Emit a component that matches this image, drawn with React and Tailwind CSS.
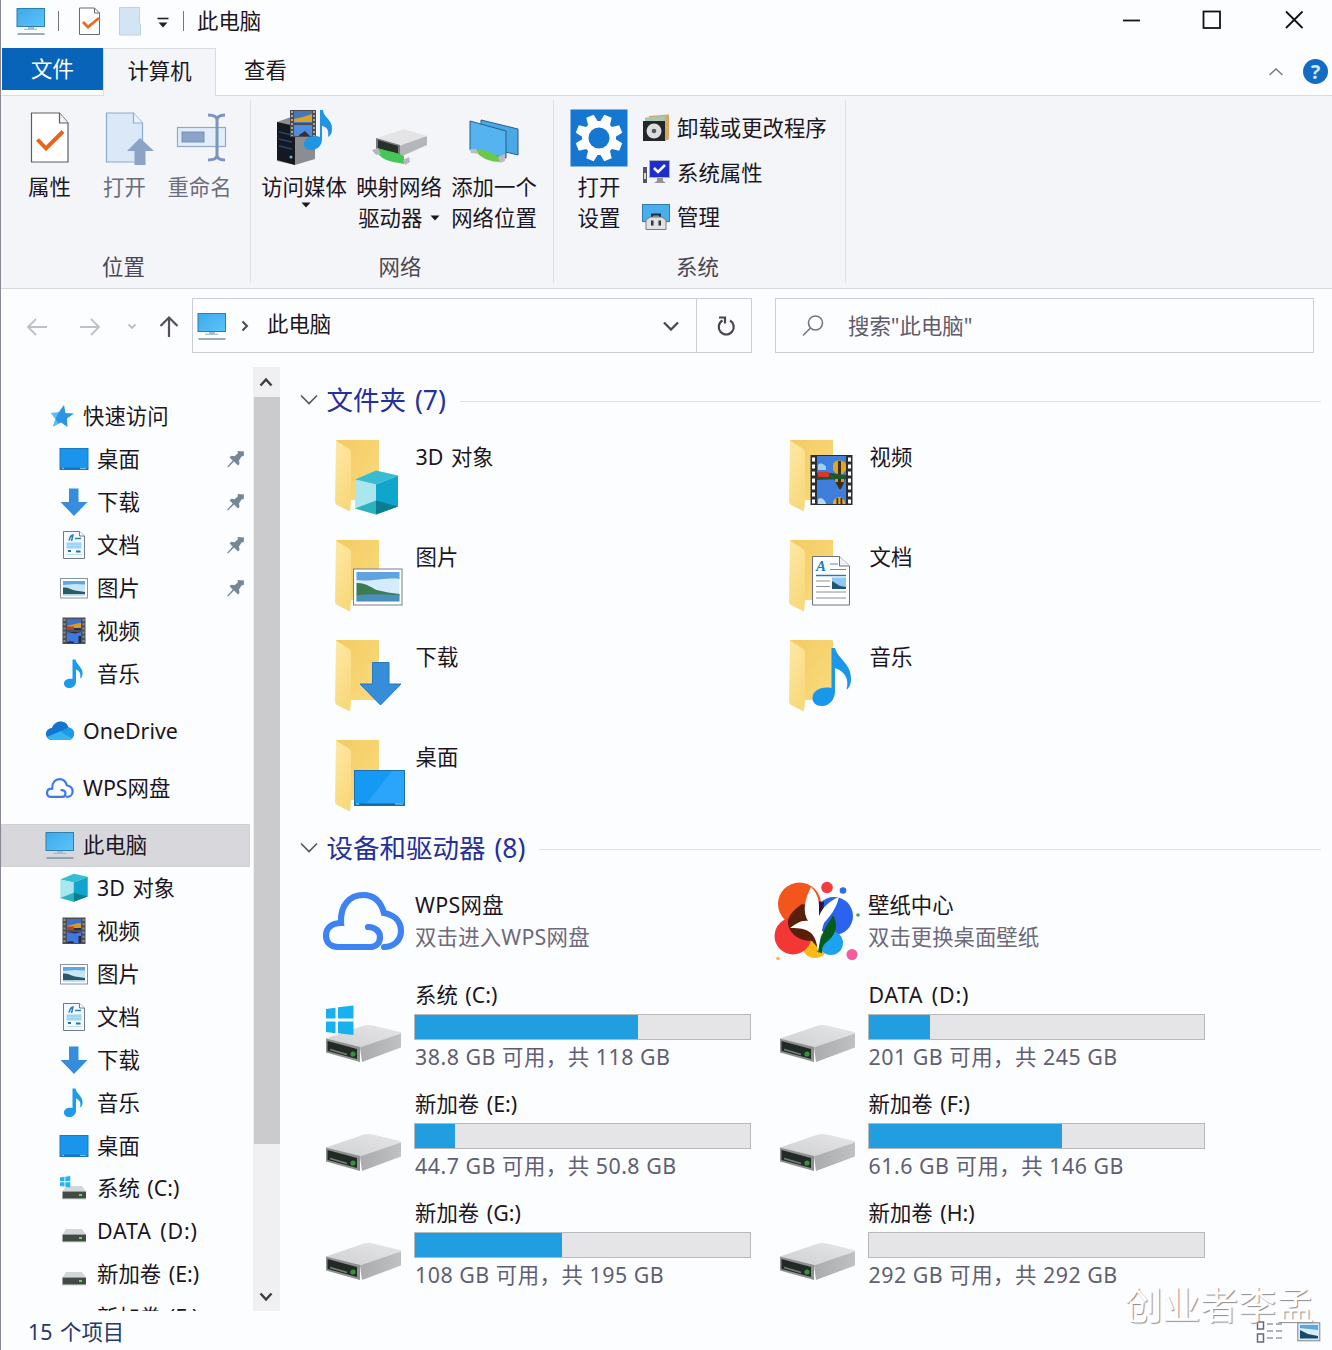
import React from 'react'

const Monitor = ({ className = '' }) => (
  <svg width="30" height="30" viewBox="0 0 30 30" className={`shrink-0 ${className}`}>
    <defs>
      <linearGradient id="screen" x1="0" y1="0" x2="1" y2="1">
        <stop offset="0" stopColor="#3fa9ea" />
        <stop offset="1" stopColor="#5cc4fb" />
      </linearGradient>
    </defs>
    <rect x="1" y="2.5" width="27.5" height="18" fill="url(#screen)" stroke="#2f7fae" strokeWidth="1" />
    <path d="M12 21h6v2h-6z" fill="#9fc4da" />
    <path d="M8 23.3h13" stroke="#9db4c4" strokeWidth="1" />
    <path d="M1.5 28h27" stroke="#8196a8" strokeWidth="1.6" />
  </svg>
)

const Star = () => (
  <svg width="30" height="30" viewBox="0 0 30 30" className="shrink-0">
    <path d="M19 4l1.500 8 8.500 0.500-7 5 .5 8.500-6.500-4.500-8 4 2.500-7.500L6 12l7.500-.5z" fill="#2a96e3" />
    <path d="M10.500 18L6 12l7.500-.5zM8 25.500l2.500-7.500 3 4.500z" fill="#5cc0f5" />
  </svg>
)

const DesktopIcon = () => (
  <svg width="30" height="30" viewBox="0 0 30 30" className="shrink-0">
    <rect x="1" y="4.500" width="28" height="21" fill="#1b95ec" stroke="#1878c0" strokeWidth="1" />
    <path d="M2 24.300h26" stroke="#1272bd" strokeWidth="1.400" />
    <path d="M3 24.300h2M21 24.300h6" stroke="#8ccdf8" strokeWidth="1" />
  </svg>
)

const DownIcon = () => (
  <svg width="30" height="30" viewBox="0 0 30 30" className="shrink-0">
    <path d="M10 1.5h9.5v13.5h9L15 29 1.500 15H10z" fill="#358ddb" />
  </svg>
)

const DocIcon = () => (
  <svg width="30" height="30" viewBox="0 0 30 30" className="shrink-0">
    <path d="M4.500 1.500h16l5 4.500v22.500h-21z" fill="#f3f9fd" stroke="#6f7c88" />
    <path d="M20.500 1.500v4.500h5" fill="#fff" stroke="#6f7c88" />
    <path d="M10 10.500c1-4 2-5.500 4-5.500l-1.500 6M16 8.500h6" stroke="#2680bb" strokeWidth="1.500" fill="none" />
    <path d="M7.500 12.500h15v6h-15z" fill="#9bd5f5" />
    <path d="M8 15.500h14M7.500 24.500h15" stroke="#b9dcf0" />
    <path d="M9 21h3M17 21.500h4.500" stroke="#2f6d98" strokeWidth="2.200" />
  </svg>
)

const PicIcon = () => (
  <svg width="30" height="30" viewBox="0 0 30 30" className="shrink-0">
    <rect x="1.500" y="5.500" width="27" height="19.500" fill="#fff" stroke="#8a93a3" />
    <rect x="4" y="8" width="22" height="14.500" fill="#c7e6fa" />
    <path d="M4 8h22v3.500l-10-.5-12 1z" fill="#5fa6e6" />
    <path d="M4 14.500c5-.5 8 2 12 3l10 1.500v2.500H4z" fill="#2c5a63" />
    <path d="M4 21h22v1.500H4z" fill="#a9d4ee" />
  </svg>
)

const VideoIcon = () => (
  <svg width="30" height="30" viewBox="0 0 30 30" className="shrink-0">
    <rect x="3.500" y="1.500" width="23" height="26.500" fill="#4d4f57" />
    <path d="M5.500 3v24M24.500 3v24" stroke="#8f9096" strokeWidth="2" strokeDasharray="2 2.200" />
    <rect x="8" y="3" width="14" height="11" fill="#3e6fc9" />
    <rect x="8" y="16" width="14" height="11" fill="#3d79e0" />
    <path d="M8 10c4-1 10-3 14-3v5H8z" fill="#d89b25" />
    <path d="M8 10.500h7V14H8z" fill="#b8402c" />
    <path d="M15 12h7v2h-7zM8 16h14l-6 1.500zM8 26c3-1 5-1 7 0v1H8zM19.500 20H22v7h-2.500z" fill="#2b2a3f" />
  </svg>
)

const MusicIcon = () => (
  <svg width="30" height="30" viewBox="0 0 30 30" className="shrink-0">
    <path d="M13.500 0.500h3c1 5.500 8 8 7 15-.3 2.500-1.300 3.500-2.500 4 1.500-5-1-8-4-9v12c0 4-3 6.500-6.500 6.500S5 27 5 24.500c0-3.500 4-5.500 8.500-4.500z" fill="#1b9bea" />
  </svg>
)

const OneDriveIcon = () => (
  <svg width="30" height="30" viewBox="0 0 30 30" className="shrink-0">
    <path d="M7 12C8 8 12 5.500 15.500 5.500c4 0 7 2 8 6 3 .3 5.500 3 5.500 6 0 3.500-2.500 6.500-6 6.500H7.500C4 24 1 21.500 1 18c0-3.500 3-6 6-6z" fill="#1474cf" />
    <path d="M23.500 11.500c3 .3 5.500 3 5.500 6 0 3.500-2.500 6.500-6 6.500H7.500C5 24 3 23 2 21z" fill="#1f9ae6" />
    <path d="M15 15.500l12.500 7C26.300 23.500 25 24 23 24H7.500C5 24 3 23 2 21z" fill="#35b4ee" />
  </svg>
)

const cloudPath =
  'M48 42C56 42 60 47 60 52C60 59 55 62 50 62H18C10 62 6 57 6 50.500C6 43 12 38 21 38C20 20 30 10 43 10C54 10 61 17 64 28C75 30 81 37 81 46C81 55 74 62 64 62'

const CloudIcon = () => (
  <svg width="30" height="30" viewBox="0 -8 88 88" className="shrink-0">
    <path d={cloudPath} fill="none" stroke="#4078e4" strokeWidth="6.500" strokeLinecap="round" />
  </svg>
)

const CubeShape = () => (
  <>
    <path d="M21 41l21-9 22 5-22 9z" fill="#37bdd3" />
    <path d="M21 41l21 5v30l-21-6z" fill="#a9e6ef" />
    <path d="M64 37v31l-22 8V46z" fill="#10a5cd" />
    <path d="M21 70l21-8v14z" fill="#2cb2bf" />
    <path d="M42 62l22 6-22 8z" fill="#0b7d92" />
  </>
)

const CubeIcon = () => (
  <svg width="30" height="30" viewBox="19 31 47 47" className="shrink-0">
    <CubeShape />
  </svg>
)

const MiniDrive = ({ windows }) => (
  <svg width="30" height="30" viewBox="0 0 30 30" className="shrink-0">
    <path d="M7 13h16l4 5.500H3.500z" fill="#d3d6d8" />
    <path d="M3.500 18.500H27v7H3.500z" fill="#414b44" />
    <path d="M3.500 25h23.500v1.200H3.500z" fill="#8f9592" />
    <path d="M20 22h3" stroke="#5fd46a" strokeWidth="2" />
    {windows && <path d="M1 4.500l4.500-.7v4.500H1zM6.300 3.700l5-.7v5.300h-5zM1 9.200h4.500v4.300L1 13zM6.300 9.200h5v5.200l-5-.7z" fill="#25b5ee" />}
  </svg>
)

const Pin = () => (
  <svg width="18" height="18" viewBox="0 0 18 18" className="shrink-0">
    <path d="M10.500 1l6.500.5-.2 4.500-2.300.5-2.500 4 .5 3.500-1.500 1.500-4-4-6 6-.8-.8 5.500-6.200-3.200-3.200 2-1.500 3 .5 3.500-3z" fill="#758795" />
  </svg>
)

const Folder = ({ children }) => (
  <svg width="74" height="80" viewBox="0 0 74 80" className="shrink-0">
    <defs>
      <linearGradient id="fback" x1="0" y1="0" x2="1" y2="1">
        <stop offset="0" stopColor="#f3cb62" />
        <stop offset="1" stopColor="#fbdb7f" />
      </linearGradient>
      <linearGradient id="ffront" x1="0" y1="0" x2="0.400" y2="1">
        <stop offset="0" stopColor="#fde9a6" />
        <stop offset="1" stopColor="#f9d97d" />
      </linearGradient>
    </defs>
    <path d="M2 2h43v60H16z" fill="url(#fback)" />
    <path d="M2 2.500l12.500 8c2 1.300 2.500 2.500 2.500 5V63c0 3-.5 6-1 10.500L5 68c-2.500-1.200-4-2-4-5z" fill="url(#ffront)" />
    {children}
  </svg>
)

const Balloons = ({ y }) => (
  <g>
    <path d={`M45 ${y + 8}c0-6 13-6 13 0v5l-4 5h-5l-4-5z`} fill="#e0a62a" />
    <path d={`M50 ${y + 4}h3v14h-3z`} fill="#3f321c" />
    <path d={`M30 ${y + 8}c2-3 6-1 8 2v3h-8z`} fill="#9ed0f0" />
  </g>
)

const FilmShape = () => (
  <>
    <rect x="22.500" y="17" width="42" height="50" fill="#2c2c33" />
    <path d="M25.500 19.500v46M61.500 19.500v46" stroke="#fff" strokeWidth="3" strokeDasharray="4 3" />
    <rect x="29" y="18" width="29" height="48" fill="#3f7fdc" />
    <Balloons y={19} />
    <path d="M29 35c6-2 10 1 14 0l15 2v4l-29 1z" fill="#24552a" />
    <path d="M30 34h11v5H30z" fill="#d03a31" />
    <path d="M46 41h11l-2 6-3 5-3-5z" fill="#402a14" />
    <path d="M47 41h3v3h-3zM53 41h3v3h-3z" fill="#d49a28" />
    <path d="M45 66c0-9 12-9 12 0z" fill="#e9ad29" />
    <path d="M48.500 60h1.800v6h-1.800zM52.500 60h1.800v6h-1.800z" fill="#352a1a" />
    <path d="M30 61c4-2 7 1 8 5h-8z" fill="#b5dcf4" />
  </>
)

const folderArt = {
  cube: <g transform="translate(0 0.500)"><CubeShape /></g>,
  picture: (
    <>
      <rect x="19.500" y="31" width="48.500" height="36" fill="#fff" stroke="#7d7f87" />
      <rect x="22.500" y="34" width="43" height="29.500" fill="#d6ebfb" />
      <path d="M22.500 34h43v7c-10-2-30 3-43 1z" fill="#5fa3e2" />
      <path d="M22.500 45c7-.5 13 3 20 7 8 2 15 3 23 4v2h-43z" fill="#3c7b53" />
      <path d="M22.500 57c14-1 28-1 43 0v6.500h-43z" fill="#4b8fbd" />
    </>
  ),
  download: <path d="M38.500 24.500h16.500V46h12L46.500 67 26 46h12.500z" fill="#368dd8" stroke="#2677bc" />,
  desktop: (
    <>
      <rect x="20.500" y="32.500" width="50" height="35" fill="#149af5" stroke="#1a6faf" />
      <path d="M32 66l26-33h12v33z" fill="#2aa5fb" />
      <path d="M21 66.300h49" stroke="#1267a5" strokeWidth="1.600" />
      <path d="M22 66h3M61 66h8" stroke="#a4d7f8" strokeWidth="1" />
    </>
  ),
  film: <FilmShape />,
  doc: (
    <>
      <path d="M24.500 18.500h27l10 9.500v39h-37z" fill="#fff" stroke="#6c7180" />
      <path d="M51.500 18.500V28h10" fill="#f1f3f6" stroke="#6c7180" />
      <text x="28" y="33" fontSize="15" fontWeight="bold" fontStyle="italic" fill="#1d7cc4" className="font-['Liberation_Serif']">A</text>
      <path d="M42 26h8M42 31.500h16" stroke="#4c90c4" />
      <path d="M28 37.500h30" stroke="#2878b5" strokeWidth="1.500" />
      <path d="M28 43h14M28 48.500h14M28 54h30M28 60h30" stroke="#8a919c" />
      <path d="M44 39.500h14V51H44z" fill="#8fc8f2" />
      <path d="M44 43l8 5 6 1v2H44z" fill="#1f5674" />
    </>
  ),
  music: (
    <path d="M43.500 10h3.500c3 11 17 16 16 32-.3 6-3 9-4.500 9.500 3-11-2-18-11.500-21.500v23c0 8-5 15-13 15-6 0-9.500-3.500-9.500-8 0-7 8-12 19-10z" fill="#1997e8" />
  ),
}

const Drive = ({ windows }) => (
  <svg width="80" height="64" viewBox="0 0 80 64" className="shrink-0">
    <defs>
      <linearGradient id="dtop" x1="0" y1="1" x2="1" y2="0">
        <stop offset="0" stopColor="#cfd0d2" />
        <stop offset="1" stopColor="#e6e6e8" />
      </linearGradient>
      <linearGradient id="dside" x1="0" y1="0" x2="1" y2="0">
        <stop offset="0" stopColor="#a9abad" />
        <stop offset="1" stopColor="#c0c1c3" />
      </linearGradient>
    </defs>
    <path d="M2 38.500l38-13c3-.7 6-.7 9 0L76 32c1.500.5 1.500 2 0 2.500L36 48.500z" fill="url(#dtop)" />
    <path d="M36 47.500l41-14v14L38 62z" fill="url(#dside)" />
    <path d="M2 38.500L36 47v15L2 52.500z" fill="#8e9190" />
    <path d="M3.500 41L33 49v10L3.500 51z" fill="#222a26" />
    <path d="M6 49.500l17 5" stroke="#77807b" strokeWidth="1.500" />
    <circle cx="29" cy="54" r="2.600" fill="#36913d" />
    {windows && <path d="M2 9l9.500-1.200V18.500H2zM14 7.200L29.500 5.500v13H14zM2 21.500h9.500v11.700L2 32zM14 21.500h15.500v13.500L14 33.200z" fill="#18b1ef" />}
  </svg>
)

const BigCloud = () => (
  <svg width="88" height="72" viewBox="0 0 88 72" className="shrink-0">
    <path d={cloudPath} fill="none" stroke="#3f82f2" strokeWidth="6.200" strokeLinecap="round" />
  </svg>
)

const WallpaperLogo = () => (
  <svg width="88" height="82" viewBox="772 880 88 82" className="shrink-0">
    <circle cx="799.500" cy="904" r="21.500" fill="#f2561d" />
    <circle cx="815" cy="945" r="13" fill="#fbb916" />
    <circle cx="793" cy="936" r="18.500" fill="#f33636" />
    <circle cx="834" cy="916" r="19" fill="#2b63ef" />
    <circle cx="831" cy="943" r="12" fill="#1da2ef" />
    <path d="M802 904c-5 4-12 8-14 17-1 9 8 20 24 20l6 7 4-39z" fill="#5a1f09" />
    <path d="M816 901l8 1-1 12-6 4z" fill="#2a1440" />
    <path d="M821 938c4-12 10-18 12-23 5 8 4 18-4 25-5 4-7 6-7 13l-5-1z" fill="#085c1b" />
    <path d="M811 887c5 5 8 11 8 19v10c4-9 10-15 20-19-3 13-10 20-15 26-3 9-4 17-6 30-1-9-2-15-7-20-5-4-10-5-21-5 6-4 11-8 18-7-6-10-3-22 3-34z" fill="#fff" />
    <circle cx="827" cy="887.500" r="5.800" fill="#f43b40" />
    <circle cx="843" cy="890.500" r="3.300" fill="#2f6bea" />
    <circle cx="858" cy="915" r="1.800" fill="#35a853" />
    <circle cx="852" cy="954.500" r="5.500" fill="#f55ca0" />
    <circle cx="778" cy="958.500" r="1.800" fill="#f5b63c" />
  </svg>
)

// ribbon icons, all in a 58px high box
const PropsIcon = () => (
  <svg width="58" height="58" viewBox="0 0 58 58">
    <path d="M10.500 4h28l8.500 10v39H10.500z" fill="#fff" stroke="#5d5d66" strokeWidth="1.200" />
    <path d="M38.500 4v10H47" fill="#f3f3f5" stroke="#5d5d66" strokeWidth="1.200" />
    <path d="M16.500 30.500L25 39.500 42 22.500" fill="none" stroke="#e8641b" strokeWidth="4" />
  </svg>
)

const OpenIcon = () => (
  <svg width="58" height="58" viewBox="0 0 58 58">
    <path d="M10.500 4h27l9 10v39h-36z" fill="#dbe8f8" stroke="#8fa9cb" strokeWidth="1.200" />
    <path d="M37.500 4v10h9" fill="#eef4fc" stroke="#8fa9cb" strokeWidth="1.200" />
    <path d="M44 29l14 13h-8.500v14h-11V42H31z" fill="#8ba3c7" />
  </svg>
)

const RenameIcon = () => (
  <svg width="58" height="58" viewBox="0 0 58 58">
    <rect x="6.500" y="18.500" width="48" height="19" fill="#e3edfa" stroke="#8fa9cb" strokeWidth="1.200" />
    <rect x="11" y="23" width="22" height="10" fill="#8ba3c7" stroke="#7490ba" />
    <path d="M37 6c5 0 9 1 9 5v35c0 4-4 5-9 5M54 6c-5 0-8 1-8 5v35c0 4 3 5 8 5" fill="none" stroke="#7c95bd" strokeWidth="3" />
  </svg>
)

const MediaIcon = () => (
  <svg width="58" height="58" viewBox="0 0 58 58">
    <path d="M2 13l14-5 24 5v37l-20 6L2 52z" fill="#8c8d93" />
    <path d="M2 13l18 4v39L2 51z" fill="#15181f" />
    <path d="M4 23l13 3M4 30l13 3M4 37l13 3" stroke="#1d4877" strokeWidth="1.500" />
    <rect x="15" y="1" width="26" height="27" fill="#4d4a50" />
    <path d="M17 2v25M39 2v25" stroke="#a9a49e" strokeWidth="2" strokeDasharray="2 2" />
    <rect x="19" y="2" width="18" height="12" fill="#4778b6" />
    <rect x="19" y="16" width="18" height="11" fill="#4c8fe0" />
    <path d="M19 10l9-2 9-3v8H19z" fill="#d9a42b" />
    <path d="M24 26l6-4 5 5H24z" fill="#33303a" />
    <path d="M45 1h3c0 7 10 10 9 19 0 5-2 7-4 8 1-7-1-10-6-11v13c0 7-5 11-11 11-5 0-7-3-7-6 0-5 5-8 11-8 2 0 3 0 5 1z" fill="#1f95e3" />
    <circle cx="16" cy="48" r="1.500" fill="#67b5f0" />
  </svg>
)

const MapDriveIcon = () => (
  <svg width="58" height="58" viewBox="0 0 58 58">
    <path d="M7 29l24-8c2-.6 4-.6 6 0l20 6-28 10z" fill="#e4e4e6" />
    <path d="M29 37l28-10v9L30 48z" fill="#b4b6b8" />
    <path d="M6 29l24 7v12L6 40z" fill="#757877" />
    <path d="M8 31l20 6v8L8 39z" fill="#28302c" />
    <path d="M7 39c8 3 16 3 27 8v8l-5-1c-8-1-15-3-20-8z" fill="#45c755" />
    <path d="M2 41l6-2 3 6-5 1zM33 51l6-3 1 5-5 3z" fill="#b4b8b9" />
  </svg>
)

const AddNetIcon = () => (
  <svg width="58" height="58" viewBox="0 0 58 58">
    <path d="M16 11l37 9v26l-37-9z" fill="#4aa8e6" stroke="#21618a" />
    <path d="M5 12l36 10v27L5 41z" fill="#55b4ef" stroke="#235f85" />
    <path d="M11 40c8 0 15 4 24 8v5c-8 0-17-3-22-8z" fill="#6cc848" />
    <path d="M5 40l6 0 3 5-8-1zM33 48l7-3v7l-5 2z" fill="#b9bfc0" />
  </svg>
)

const GearIcon = () => (
  <svg width="58" height="58" viewBox="0 0 58 58">
    <rect x="0.500" y="0.500" width="57" height="57" fill="#1577cf" />
    <g transform="translate(29 29)" fill="#fff">
      {[22.5, 67.5, 112.5, 157.5, 202.5, 247.5, 292.5, 337.5].map((a) => (
        <path key={a} d="M-5.500-14l1.500-9.500h8l1.500 9.500z" transform={`rotate(${a})`} />
      ))}
      <circle r="17" />
      <circle r="10.500" fill="#1577cf" />
    </g>
  </svg>
)

const UninstallIcon = () => (
  <svg width="28" height="28" viewBox="0 0 28 28">
    <path d="M7 2l20-1.500V25l-4 2V6H7z" fill="#d8a65e" />
    <path d="M3 3.500L23 2v6H3z" fill="#a9c7b4" />
    <rect x="1" y="7" width="22" height="20" fill="#25262a" />
    <circle cx="12" cy="17" r="7.500" fill="#dcdddf" />
    <circle cx="12" cy="17" r="2.300" fill="#55585c" />
  </svg>
)

const SysPropsIcon = () => (
  <svg width="28" height="28" viewBox="0 0 28 28">
    <path d="M1 8h4v16H1z" fill="#54585e" />
    <path d="M2 14h2v6H2z" fill="#d5d8db" />
    <rect x="7.500" y="1.500" width="20" height="17" fill="#1c2fcb" stroke="#a9b1c5" />
    <path d="M12 9l4 4 7-7" fill="none" stroke="#fff" strokeWidth="2.500" />
    <path d="M15 19h6v3l3 2H12l3-2z" fill="#9a9299" />
  </svg>
)

const ManageIcon = () => (
  <svg width="28" height="28" viewBox="0 0 28 28">
    <rect x="0.500" y="1.500" width="27" height="17" fill="#4aaeec" stroke="#347dab" />
    <path d="M10 14v-2.500h8V14" fill="none" stroke="#2a2d33" strokeWidth="2" />
    <path d="M4 17l4-3h12l4 3v9.500H4z" fill="#dfe1e3" stroke="#777b80" />
    <path d="M9 17.500h2.500v5H9zM16.500 17.500H19v5h-2.500z" fill="#33363b" />
  </svg>
)

const places = [
  { label: '桌面', icon: DesktopIcon, pin: true },
  { label: '下载', icon: DownIcon, pin: true },
  { label: '文档', icon: DocIcon, pin: true },
  { label: '图片', icon: PicIcon, pin: true },
  { label: '视频', icon: VideoIcon },
  { label: '音乐', icon: MusicIcon },
]

const pcItems = [
  { label: '3D 对象', icon: CubeIcon },
  { label: '视频', icon: VideoIcon },
  { label: '图片', icon: PicIcon },
  { label: '文档', icon: DocIcon },
  { label: '下载', icon: DownIcon },
  { label: '音乐', icon: MusicIcon },
  { label: '桌面', icon: DesktopIcon },
  { label: '系统 (C:)', icon: () => <MiniDrive windows /> },
  { label: 'DATA (D:)', icon: MiniDrive, wide: true },
  { label: '新加卷 (E:)', icon: MiniDrive },
  { label: '新加卷 (F:)', icon: () => <span className="w-[30px]" /> },
]

const folders = [
  { label: '3D 对象', art: 'cube' },
  { label: '视频', art: 'film' },
  { label: '图片', art: 'picture' },
  { label: '文档', art: 'doc' },
  { label: '下载', art: 'download' },
  { label: '音乐', art: 'music' },
  { label: '桌面', art: 'desktop' },
]

const drives = [
  { name: '系统 (C:)', info: '38.8 GB 可用，共 118 GB', used: 66.7, windows: true },
  { name: 'DATA (D:)', info: '201 GB 可用，共 245 GB', used: 18.3, wide: true },
  { name: '新加卷 (E:)', info: '44.7 GB 可用，共 50.8 GB', used: 12 },
  { name: '新加卷 (F:)', info: '61.6 GB 可用，共 146 GB', used: 57.8 },
  { name: '新加卷 (G:)', info: '108 GB 可用，共 195 GB', used: 44 },
  { name: '新加卷 (H:)', info: '292 GB 可用，共 292 GB', used: 0 },
]

const TreeRow = ({ item, root, active }) => {
  const Icon = item.icon
  return (
    <div className={`flex h-[42.9px] w-[249px] shrink-0 items-center ${active ? 'border border-[#cfcfd4] bg-[#d8d8dc] pl-[43px]' : root ? 'pl-11' : 'pl-[58px]'}`}>
      <Icon />
      <span className={`ml-2 whitespace-nowrap ${item.wide ? 'tracking-[0.85px]' : ''}`}>{item.label}</span>
      {item.pin && <span className="mr-[5px] ml-auto"><Pin /></span>}
    </div>
  )
}

const GroupHeading = ({ children }) => (
  <div className="flex h-9 items-center text-[26.5px] text-[#26309a]">
    <svg width="18" height="12" viewBox="0 0 18 12" className="mr-[9px] shrink-0">
      <path d="M1 1.500l8 8 8-8" fill="none" stroke="#55555f" strokeWidth="1.600" />
    </svg>
    <span className="whitespace-nowrap">{children}</span>
    <span className="mt-0.5 ml-[14px] h-px flex-1 bg-[#dcdfe8]" />
  </div>
)

const RibbonButton = ({ icon, lines, width, muted, arrow }) => (
  <div className={`flex flex-col items-center ${width} ${muted ? 'text-[#6d6c7c]' : ''}`}>
    {icon}
    <div className="mt-1 text-center leading-[31px] whitespace-nowrap">
      {lines.map((l, i) => <div key={i}>{l}</div>)}
    </div>
    {arrow && <Caret className="ml-1" />}
  </div>
)

const Caret = ({ className = '' }) => (
  <svg width="10" height="6" viewBox="0 0 10 6" className={`inline-block ${className}`}>
    <path d="M0.500 0.500h9L5 5.500z" fill="#1b1720" />
  </svg>
)

const RibbonGroup = ({ width, label, children }) => (
  <div className={`flex flex-col justify-between border-r border-[#dcdfe5] ${width}`}>
    <div className="flex">{children}</div>
    <div className="pr-1 pb-[1px] text-center leading-[30px] text-[#4a4753]">{label}</div>
  </div>
)

const App = () => (
  <div className="relative flex h-[1350px] w-[1332px] flex-col overflow-hidden border-l border-[#8d8796] bg-[#fcfdff] font-['Noto_Sans','Noto_Sans_CJK_SC',sans-serif] text-[21.4px] leading-[30px] text-[#1b1622] [word-spacing:2px]">
    {/* title bar */}
    <header className="flex h-12 shrink-0 items-start">
      <div className="flex h-[42px] items-center pl-[15px]">
        <Monitor />
        <span className="ml-3 h-5 w-px bg-[#77747d]" />
        <svg width="24" height="30" viewBox="0 0 24 30" className="ml-[19px]">
          <path d="M1.500 2h15l5 5v21.500h-20z" fill="#fff" stroke="#6a6870" />
          <path d="M16.500 2v5h5" fill="none" stroke="#6a6870" />
          <path d="M5 16l5 5 11-9" fill="none" stroke="#ea6b28" strokeWidth="2.800" />
        </svg>
        <svg width="24" height="30" viewBox="0 0 24 30" className="ml-4">
          <path d="M1.500 1.500h20V17l1 1v11h-21z" fill="#d3e4f5" stroke="#bcd2e8" />
        </svg>
        <svg width="12" height="12" viewBox="0 0 12 12" className="mt-1 ml-[15px]">
          <path d="M0.500 1.500h11" stroke="#222" strokeWidth="1.600" />
          <path d="M1.500 5.500h9L6 10.500z" fill="#222" />
        </svg>
        <span className="ml-[14px] h-5 w-px bg-[#77747d]" />
        <span className="ml-[13px]">此电脑</span>
      </div>
      <svg width="182" height="20" viewBox="0 0 182 20" className="mt-[10px] mr-[27px] ml-auto" fill="none" stroke="#141218" strokeWidth="1.800">
        <path d="M0 10.500h17" />
        <rect x="80.500" y="1.500" width="16.500" height="16.500" />
        <path d="M163 1.500l16.500 16.500M179.500 1.500L163 18" />
      </svg>
    </header>

    {/* tabs */}
    <div className="flex h-12 shrink-0 items-start border-b border-[#d9dce0]">
      <div className="ml-px flex h-[42px] w-[101px] items-center justify-center bg-[#0864b8] text-white">文件</div>
      <div className="flex h-12 w-[113px] items-center justify-center border border-b-0 border-[#d9dce0] bg-[#f4f5f9] pb-1">计算机</div>
      <div className="ml-7 flex h-11 items-center">查看</div>
      <div className="mt-[11px] mr-1 ml-auto flex items-center">
        <svg width="14" height="8" viewBox="0 0 14 8">
          <path d="M0.500 7L7 1l6.500 6" fill="none" stroke="#7b7984" strokeWidth="1.500" />
        </svg>
        <span className="ml-5 flex h-[25px] w-[25px] items-center justify-center rounded-full bg-[#136cc4] text-xl font-bold text-[#cfe6fb]">?</span>
      </div>
    </div>

    {/* ribbon */}
    <div className="flex h-[193px] shrink-0 border-b border-[#d5d8dd] bg-[#f4f5f9] pt-1 pb-[5px]">
      <RibbonGroup width="w-[250px]" label="位置">
        <div className="flex pt-[9px] pl-[11px]">
          <RibbonButton width="w-[75px]" icon={<PropsIcon />} lines={['属性']} />
          <RibbonButton width="w-[75px]" icon={<OpenIcon />} lines={['打开']} muted />
          <RibbonButton width="w-[75px]" icon={<RenameIcon />} lines={['重命名']} muted />
        </div>
      </RibbonGroup>
      <RibbonGroup width="w-[303px]" label="网络">
        <div className="flex pt-[9px] pl-[5.500px]">
          <RibbonButton width="w-[95px]" icon={<MediaIcon />} lines={['访问媒体']} arrow />
          <RibbonButton width="w-[95px]" icon={<MapDriveIcon />} lines={['映射网络', <span>驱动器 <Caret className="mb-1" /></span>]} />
          <RibbonButton width="w-[95px]" icon={<AddNetIcon />} lines={['添加一个', '网络位置']} />
        </div>
      </RibbonGroup>
      <RibbonGroup width="w-[292px]" label="系统">
        <div className="flex pt-[9px] pl-[16px]">
          <RibbonButton width="w-[58px]" icon={<GearIcon />} lines={['打开', '设置']} />
          <div className="ml-[14px] flex flex-col gap-[14.500px] pt-1">
            <div className="flex items-center gap-[7px]"><UninstallIcon />卸载或更改程序</div>
            <div className="flex items-center gap-[7px]"><SysPropsIcon />系统属性</div>
            <div className="flex items-center gap-[7px]"><ManageIcon />管理</div>
          </div>
        </div>
      </RibbonGroup>
    </div>

    {/* address bar */}
    <div className="flex h-[74px] shrink-0 items-start pt-[9px]">
      <svg width="191" height="56" viewBox="1 298 191 56" fill="none" strokeWidth="1.800">
        <path d="M47 327H28M36 319l-8 8 8 8M80 327h19M91 319l8 8-8 8" stroke="#bfbfc8" />
        <path d="M128.500 324.500l3.500 3.500 3.500-3.500" stroke="#bcbcc5" />
        <path d="M169 337v-19M160.500 326l8.500-8.500 8.500 8.500" stroke="#55505c" strokeWidth="2.200" />
      </svg>
      <div className="flex h-[55px] w-[560px] items-center border border-[#cbced6]">
        <Monitor className="ml-1" />
        <svg width="8" height="12" viewBox="0 0 8 12" className="ml-[14px]">
          <path d="M1.500 1.500L6 6l-4.500 4.500" fill="none" stroke="#4a4652" strokeWidth="2" />
        </svg>
        <span className="mb-[3px] ml-[18px]">此电脑</span>
        <svg width="16" height="10" viewBox="0 0 16 10" className="mr-[17px] ml-auto">
          <path d="M1 1.500l7 7 7-7" fill="none" stroke="#4a4652" strokeWidth="2.300" />
        </svg>
        <div className="flex h-full w-[55px] items-center justify-center border-l border-[#cbced6]">
          <svg width="20" height="22" viewBox="0 0 20 22" fill="none" stroke="#4a4450" strokeWidth="2.200" className="ml-1">
            <path d="M14 5.500a7.500 7.500 0 1 1-7.500 0" />
            <path d="M3 2.500h6v6" />
          </svg>
        </div>
      </div>
      <div className="ml-[23px] flex h-[55px] w-[539px] items-center border border-[#cbced6] text-[#5f5b6b]">
        <svg width="22" height="22" viewBox="0 0 22 22" className="ml-[26px]" fill="none" stroke="#77747f" strokeWidth="1.600">
          <circle cx="13.500" cy="8" r="7" />
          <path d="M8.500 13L1 20.500" />
        </svg>
        <span className="ml-6">搜索"此电脑"</span>
      </div>
    </div>

    {/* body */}
    <div className="flex min-h-0 flex-1">
      <nav className="flex w-[252px] shrink-0 flex-col overflow-hidden pt-8">
        <TreeRow root item={{ label: '快速访问', icon: Star }} />
        {places.map((p) => <TreeRow key={p.label} item={p} />)}
        <div className="mt-[14.300px] flex flex-col gap-[14.300px]">
          <TreeRow root item={{ label: 'OneDrive', icon: OneDriveIcon }} />
          <TreeRow root item={{ label: 'WPS网盘', icon: CloudIcon }} />
          <TreeRow root active item={{ label: '此电脑', icon: Monitor }} />
        </div>
        {pcItems.map((p) => <TreeRow key={p.label} item={p} />)}
      </nav>

      <div className="mt-1 flex w-[27px] shrink-0 flex-col items-center bg-[#f0f0f3]">
        <div className="flex h-[30px] items-center">
          <svg width="14" height="10" viewBox="0 0 14 10" className="mr-0.5"><path d="M1.500 8.500L7 2.500l5.500 6" fill="none" stroke="#3f3c44" strokeWidth="2.500" /></svg>
        </div>
        <div className="h-[747px] w-[26px] bg-[#cbcbce]" />
        <div className="mt-auto flex h-[28px] items-center">
          <svg width="14" height="10" viewBox="0 0 14 10" className="mr-0.5"><path d="M1.500 1.500L7 7.500l5.500-6" fill="none" stroke="#3f3c44" strokeWidth="2.500" /></svg>
        </div>
      </div>

      <main className="min-w-0 flex-1 pt-[19px] pr-[11px] pl-[19.500px]">
        <GroupHeading>文件夹 (7)</GroupHeading>
        <div className="mt-[20px] ml-[34px] grid grid-cols-[454px_1fr]">
          {folders.map((f) => (
            <div key={f.label} className="flex h-[100px] items-start">
              <Folder>{folderArt[f.art]}</Folder>
              <span className="mt-1 ml-2">{f.label}</span>
            </div>
          ))}
        </div>

        <div className="-mt-[8px]"><GroupHeading>设备和驱动器 (8)</GroupHeading></div>
        <div className="mt-[12px] ml-[20.500px] grid h-[102px] grid-cols-[453px_1fr]">
          <div className="flex items-start">
            <div className="mt-[7px]"><BigCloud /></div>
            <div className="mt-[11px] ml-[7px] leading-[32px]">
              <div className="tracking-[0.3px]">WPS网盘</div>
              <div className="tracking-[0.200px] text-[#6d697b]">双击进入WPS网盘</div>
            </div>
          </div>
          <div className="flex items-start">
            <div className="mt-[2px] -ml-[1px]"><WallpaperLogo /></div>
            <div className="mt-[11px] ml-[8px] leading-[32px]">
              <div>壁纸中心</div>
              <div className="text-[#6d697b]">双击更换桌面壁纸</div>
            </div>
          </div>
        </div>
        <div className="ml-[24.500px] grid grid-cols-[453.500px_1fr]">
          {drives.map((d) => (
            <div key={d.name} className="flex h-[109px] items-start">
              <div className="mt-[20px]"><Drive windows={d.windows} /></div>
              <div className="ml-[10px]">
                <div className={`h-[34px] pl-px ${d.wide ? 'tracking-[0.85px]' : ''}`}>{d.name}</div>
                <div className="h-[26px] w-[337px] border border-[#b9b9bd] bg-[#e5e5e7]">
                  <div className="h-full bg-[#209ee0]" style={{ width: `${d.used}%` }} />
                </div>
                <div className="mt-[2px] pl-px tracking-[0.500px] whitespace-nowrap text-[#625e72] [word-spacing:0px]">{d.info}</div>
              </div>
            </div>
          ))}
        </div>
      </main>
    </div>

    {/* status bar */}
    <footer className="flex h-[39px] shrink-0 items-center pt-0.5 pr-[11px] pl-[27px] text-[#27396a]">
      <span>15 个项目</span>
      <svg width="28" height="24" viewBox="0 0 28 24" className="ml-auto" fill="none" stroke="#696775" strokeWidth="1.500">
        <path d="M1.500 2h6v7h-6zM1.500 14h6v8h-6z" />
        <path d="M11 4h6M20 4h6M11 11h6M20 11h6M11 18h6M20 18h6" strokeWidth="1.200" />
      </svg>
      <svg width="24" height="20" viewBox="0 0 24 20" className="ml-[13px]">
        <rect x="0.800" y="0.800" width="22" height="18" fill="#d7ecfa" stroke="#7e8490" />
        <path d="M3 3h18v5L3 6z" fill="#5aa7dc" />
        <path d="M3 8l8 4 10 2v2.500H3z" fill="#184a66" />
      </svg>
    </footer>

    <div className="absolute right-[18px] bottom-[20px] text-[37.900px] leading-[52px] whitespace-nowrap text-white [text-shadow:1px_1px_1px_#8a8a90]">创业者李孟</div>
  </div>
)

export default App
